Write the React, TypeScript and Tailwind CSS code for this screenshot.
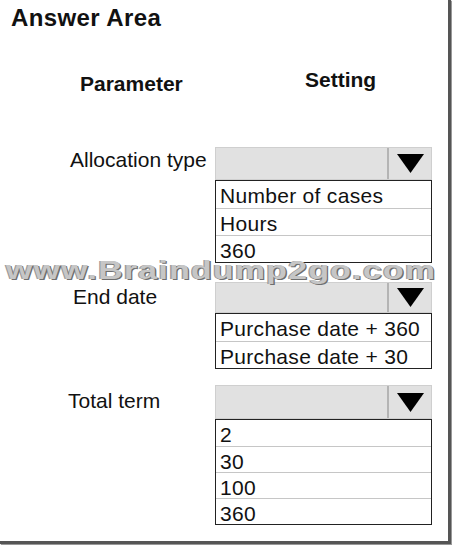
const font = "font-['Liberation_Sans',Arial,sans-serif]";

type Field = {
  label: string;
  labelPad: string;
  top: string;
  selectH: string;
  rowH: string;
  options: string[];
};

const fields: Field[] = [
  { label: "Allocation type", labelPad: "pl-[70px] pt-[1px]", top: "mt-[51px]", selectH: "h-[33px]", rowH: "h-[27px]", options: ["Number of cases", "Hours", "360"] },
  { label: "End date", labelPad: "pl-[73px] pt-[3px]", top: "mt-[19px]", selectH: "h-[31px]", rowH: "h-[27px]", options: ["Purchase date + 360", "Purchase date + 30"] },
  { label: "Total term", labelPad: "pl-[68px] pt-[4px]", top: "mt-[16px]", selectH: "h-[34px]", rowH: "h-[26px]", options: ["2", "30", "100", "360"] },
];

function Dropdown({ h, rowH, options }: { h: string; rowH: string; options: string[] }) {
  return (
    <div className="w-[217px]">
      <div className={`${h} flex border border-[#cfcfcf] bg-[#e1e1e1]`}>
        <div className="flex-1" />
        <div className="w-[44px] border-l-2 border-[#b4b4b4] flex items-center justify-center">
          <svg width="27" height="19" viewBox="0 0 27 19">
            <polygon points="0,0 27,0 13.5,19" fill="#000" />
          </svg>
        </div>
      </div>
      <div className="border border-[#222] bg-white">
        {options.map((o, i) => (
          <div
            key={o}
            className={`${rowH} pl-[4px] pt-[3px] text-[21px] leading-[24px] tracking-[0.3px] text-[#111] ${i > 0 ? "border-t border-[#c6c6c6]" : ""}`}
          >
            {o}
          </div>
        ))}
      </div>
    </div>
  );
}

export default function App() {
  return (
    <div className={`relative w-[452px] h-[545px] bg-white ${font}`}>
      <div className="w-[451px] h-[544px] border-r-[3px] border-b-[3px] border-[#555] shadow-[1px_1px_1px_#999]">
        <h1 className="pl-[11px] pt-[4px] text-[24px] leading-[28px] font-bold tracking-[0.4px] text-[#111]">Answer Area</h1>

        <div className="mt-[36px] flex h-[28px] text-[21px] leading-[24px] font-bold text-[#111]">
          <div className="pl-[80px] pt-[4px] w-[305px]">Parameter</div>
          <div>Setting</div>
        </div>

        {fields.map((f) => (
          <div key={f.label} className={`${f.top} flex`}>
            <div className={`w-[215px] ${f.labelPad} text-[21px] leading-[24px] text-[#111]`}>{f.label}</div>
            <Dropdown h={f.selectH} rowH={f.rowH} options={f.options} />
          </div>
        ))}
      </div>

      <div className="absolute left-[6px] top-[256px] origin-left scale-x-[1.3] text-[26px] leading-[28px] font-bold tracking-[1px] text-[#c6c6c6] [text-shadow:1px_1px_0_#6f6f6f,-1px_0_0_#9a9a9a]">
        www.Braindump2go.com
      </div>
    </div>
  );
}
